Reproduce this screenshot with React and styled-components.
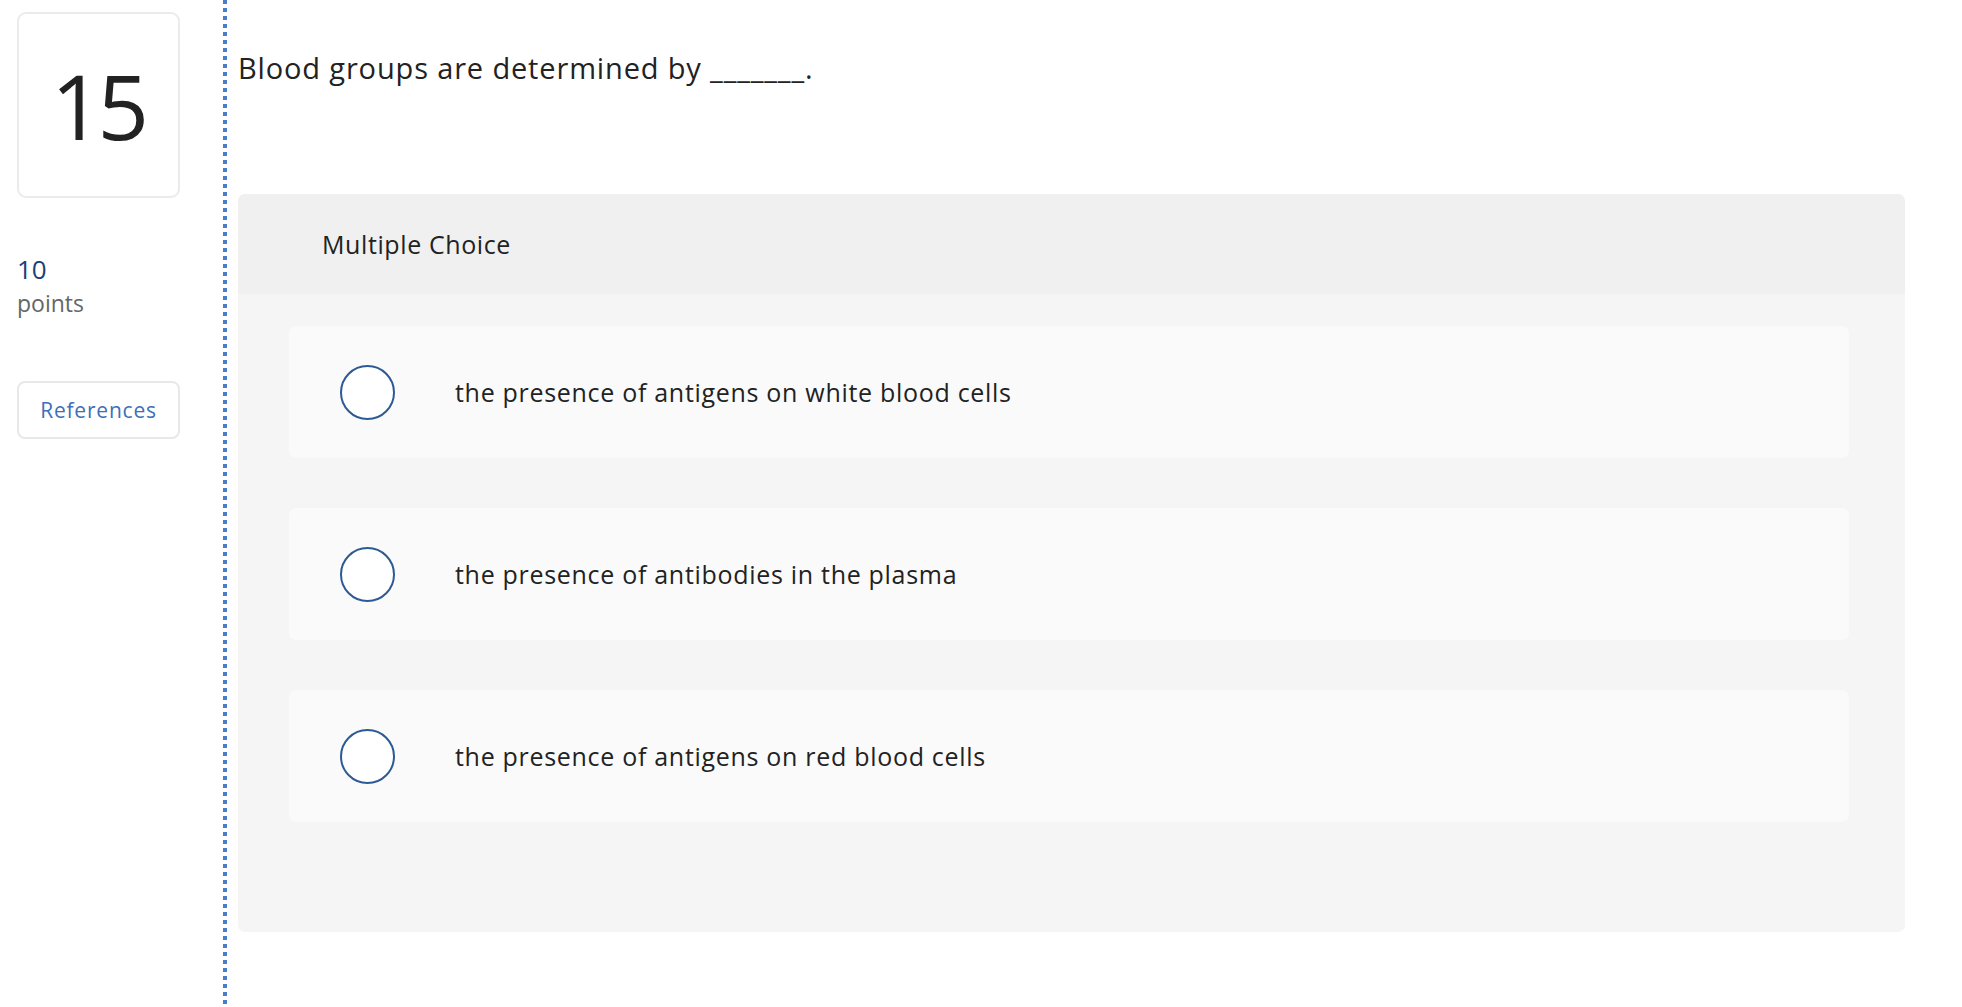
import React from 'react'
import styled, { createGlobalStyle } from 'styled-components'

const GlobalStyle = createGlobalStyle`
  html, body {
    margin: 0;
    padding: 0;
    background: #ffffff;
    font-family: "Open Sans", Lato, sans-serif;
    color: #222222;
  }
`

const Page = styled.div`
  display: flex;
  flex-direction: row;
  align-items: stretch;
  min-height: 100vh;
`

const Sidebar = styled.div`
  width: 163px;
  padding: 12px 0 0 17px;
  margin-right: 43px;
  display: flex;
  flex-direction: column;
`

const NumberBox = styled.div`
  box-sizing: border-box;
  width: 163px;
  height: 186px;
  border: 2px solid #ebebeb;
  border-radius: 9px;
  display: flex;
  align-items: center;
  justify-content: center;
  font-size: 90px;
  letter-spacing: -5px;
  padding-right: 2px;
  color: #222222;
`

const Points = styled.div`
  margin-top: 54px;
  display: flex;
  flex-direction: column;
`

const PointsValue = styled.span`
  font-size: 26px;
  line-height: 34px;
  color: #1c3f73;
`

const PointsLabel = styled.span`
  margin-top: 2px;
  font-size: 23px;
  line-height: 30px;
  color: #666666;
`

const RefButton = styled.button`
  box-sizing: border-box;
  margin-top: 63px;
  width: 163px;
  height: 58px;
  border: 2px solid #e8e8e8;
  border-radius: 8px;
  background: #ffffff;
  font-family: inherit;
  font-size: 21px;
  letter-spacing: 0.8px;
  color: #3d6fb6;
  cursor: pointer;
`

const Divider = styled.div`
  flex: 0 0 4px;
  width: 4px;
  background-image: linear-gradient(to bottom, #4a7cc7 0 4px, transparent 4px 8px);
  background-size: 4px 8px;
  background-repeat: repeat-y;
`

const Main = styled.div`
  margin-left: 11px;
  width: 1667px;
  padding-top: 50px;
`

const Question = styled.div`
  font-size: 29px;
  line-height: 36px;
  letter-spacing: 0.85px;
  color: #222222;
`

const Panel = styled.div`
  margin-top: 108px;
  border-radius: 7px;
  overflow: hidden;
  background: #f5f5f5;
`

const PanelHeader = styled.div`
  height: 100px;
  background: #f0f0f0;
  display: flex;
  align-items: center;
  padding-left: 84px;
  font-size: 25px;
  letter-spacing: 0.6px;
  color: #222222;
`

const OptionList = styled.div`
  display: flex;
  flex-direction: column;
  gap: 50px;
  padding: 32px 56px 110px 51px;
`

const OptionCard = styled.label`
  height: 132px;
  background: #fafafa;
  border-radius: 7px;
  display: flex;
  align-items: center;
  padding-left: 51px;
  cursor: pointer;
`

const Radio = styled.span`
  box-sizing: border-box;
  flex: 0 0 55px;
  width: 55px;
  height: 55px;
  border-radius: 50%;
  border: 2px solid #2b5a94;
  background: #ffffff;
`

const OptionText = styled.span`
  margin-left: 60px;
  font-size: 25px;
  letter-spacing: 0.7px;
  color: #222222;
`

const options = [
  'the presence of antigens on white blood cells',
  'the presence of antibodies in the plasma',
  'the presence of antigens on red blood cells'
]

export default function App() {
  return (
    <>
      <GlobalStyle />
      <Page>
        <Sidebar>
          <NumberBox>15</NumberBox>
          <Points>
            <PointsValue>10</PointsValue>
            <PointsLabel>points</PointsLabel>
          </Points>
          <RefButton>References</RefButton>
        </Sidebar>
        <Divider />
        <Main>
          <Question>Blood groups are determined by _______.</Question>
          <Panel>
            <PanelHeader>Multiple Choice</PanelHeader>
            <OptionList>
              {options.map(text => (
                <OptionCard key={text}>
                  <Radio />
                  <OptionText>{text}</OptionText>
                </OptionCard>
              ))}
            </OptionList>
          </Panel>
        </Main>
      </Page>
    </>
  )
}
